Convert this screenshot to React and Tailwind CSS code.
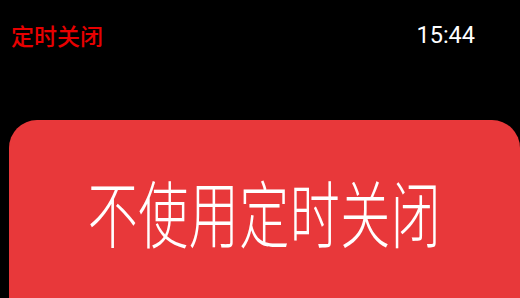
import React from "react";

const cjk = { fontFamily: '"Noto Sans CJK SC", "Noto Sans", sans-serif' };

const App = () => {
  return (
    <div className="w-[520px] h-[298px] bg-black overflow-hidden">
      {/* top bar */}
      <div className="flex items-center justify-between pl-[11px] pr-[45px] h-[72px]">
        <span className="text-[23px] leading-none font-medium text-[#e80000] -mt-[1px]" style={cjk}>
          定时关闭
        </span>
        <span
          className="text-[23.5px] leading-none text-white"
          style={{ fontFamily: "Roboto, sans-serif" }}
        >
          15:44
        </span>
      </div>

      {/* action button */}
      <div className="ml-[9px] mt-[48px] w-[511px] h-[240px] bg-[#e8383a] rounded-[28px]">
        <div className="h-[180px] flex items-center justify-center">
          <span className="text-[50px] leading-none text-white font-light scale-y-145 tracking-[0.5px]" style={cjk}>
            不使用定时关闭
          </span>
        </div>
      </div>
    </div>
  );
};

export default App;
